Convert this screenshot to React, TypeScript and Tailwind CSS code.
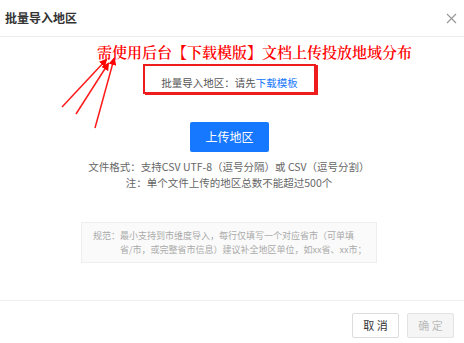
import React from "react";

export default function App() {
  return (
    <div className="relative w-[464px] h-[343px] bg-white font-['Noto_Sans_CJK_SC','Liberation_Sans',sans-serif] overflow-hidden">
      <div className="h-[37px] flex items-center justify-between border-b border-[#ececec] pl-[5px] pr-[7px]">
        <div className="text-[12px] font-bold text-[#333] leading-none">批量导入地区</div>
        <svg width="11" height="11" viewBox="0 0 11 11" className="text-[#999]">
          <path d="M1 1L10 10M10 1L1 10" stroke="currentColor" strokeWidth="1.2" />
        </svg>
      </div>
      <div className="h-[263px] flex flex-col">
        <div className="pl-[97px] pt-[2px] h-[27px] flex items-center text-[15px] leading-none text-[#ff0000] font-semibold font-['Noto_Serif_CJK_SC','Noto_Sans_CJK_SC',serif] whitespace-nowrap">
          需使用后台【下载模版】文档上传投放地域分布
        </div>
        <div className="ml-[143px] w-[173px] h-[30px] border-2 border-[#ee1c1c] shadow-[2px_1px_0_0_#ee1c1c] flex items-center justify-center pt-[7px] text-[10.5px] text-[#555] whitespace-nowrap">
          <span>批量导入地区：请先</span>
          <span className="text-[#1677ff]">下载模板</span>
        </div>
        <div className="ml-[190px] mt-[28px] w-[79px] h-[30px] bg-[#1677ff] rounded-[2px] text-white text-[12px] flex items-center justify-center">
          上传地区
        </div>
        <div className="mt-[7px] pr-[6px] text-center text-[10.5px] leading-[16px] text-[#666] whitespace-nowrap">
          <div>文件格式：支持CSV UTF-8（逗号分隔）或 CSV（逗号分割）</div>
          <div>注：单个文件上传的地区总数不能超过500个</div>
        </div>
        <div className="ml-[81px] mt-[31px] w-[296px] h-[41px] bg-[#fafafa] border border-[#eeeeee] flex pl-[11px] pt-[6px] text-[9px] leading-[14px] text-[#aaa] whitespace-nowrap">
          <div>规范：</div>
          <div>
            <div>最小支持到市维度导入，每行仅填写一个对应省市（可单填</div>
            <div>省/市，或完整省市信息）建议补全地区单位，如xx省、xx市；</div>
          </div>
        </div>
      </div>
      <div className="border-t border-[#f0f0f0] h-[43px] flex items-start justify-end pt-[12px] pr-[10px] gap-[8px]">
        <div className="w-[47px] h-[25px] border border-[#dcdcdc] rounded-[2px] bg-white text-[11px] text-[#333] flex items-center justify-center">取 消</div>
        <div className="w-[47px] h-[25px] border border-[#e3e3e3] rounded-[2px] bg-[#f5f5f5] text-[11px] text-[#bbb] flex items-center justify-center">确 定</div>
      </div>
      <svg className="absolute left-0 top-0 pointer-events-none" width="464" height="343" viewBox="0 0 464 343">
        <defs>
          <marker id="ah" markerWidth="8" markerHeight="8" refX="6" refY="4" orient="auto" markerUnits="userSpaceOnUse">
            <path d="M0 0L8 4L0 8Z" fill="#ff0000" />
          </marker>
        </defs>
        <line x1="62" y1="107" x2="106" y2="60" stroke="#ff1a1a" strokeWidth="1.5" markerEnd="url(#ah)" />
        <line x1="76" y1="114" x2="108" y2="64" stroke="#ff1a1a" strokeWidth="1.5" markerEnd="url(#ah)" />
        <line x1="95" y1="128" x2="114" y2="59" stroke="#ff1a1a" strokeWidth="1.5" markerEnd="url(#ah)" />
      </svg>
    </div>
  );
}
